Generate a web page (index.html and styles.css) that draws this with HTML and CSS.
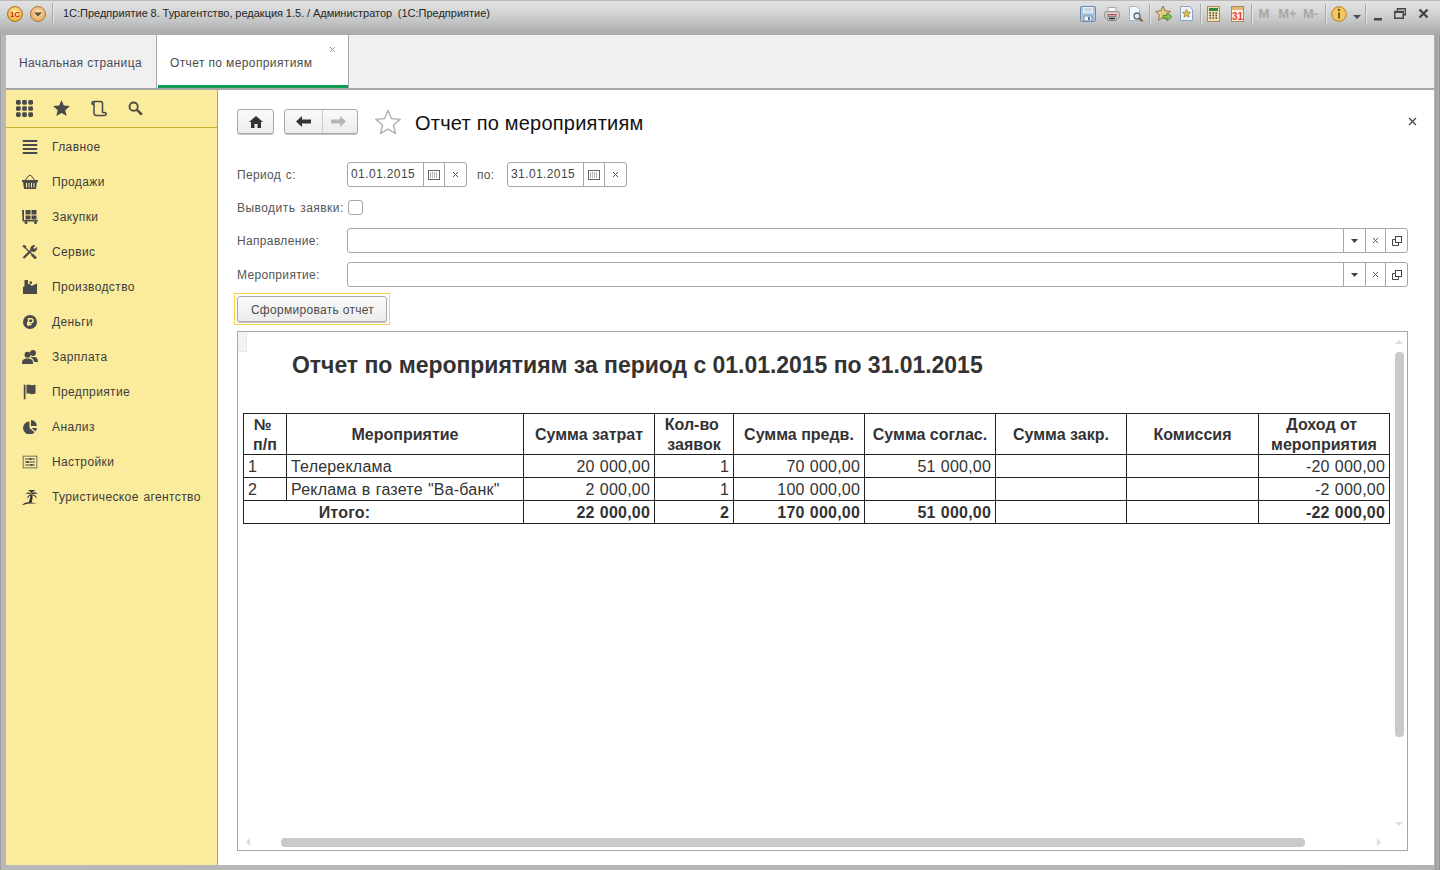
FILE: index.html
```html
<!DOCTYPE html>
<html lang="ru">
<head>
<meta charset="utf-8">
<title>Отчет по мероприятиям</title>
<link rel="stylesheet" href="styles.css">
</head>
<body>
<div class="window">
  <header class="titlebar">
    <svg class="t-logo" width="18" height="18" viewBox="0 0 18 18"><defs><radialGradient id="lg" cx="50%" cy="40%" r="60%"><stop offset="0" stop-color="#fff3b0"/><stop offset="1" stop-color="#eda62c"/></radialGradient></defs><circle cx="9" cy="9" r="7.5" fill="url(#lg)" stroke="#a8762a"/><text x="9" y="12" text-anchor="middle" class="t-logo-text">1С</text></svg>
    <svg class="t-menu" width="18" height="18" viewBox="0 0 18 18"><defs><radialGradient id="lm" cx="50%" cy="40%" r="60%"><stop offset="0" stop-color="#fde3b4"/><stop offset="1" stop-color="#e6a558"/></radialGradient></defs><circle cx="9" cy="9" r="7.5" fill="url(#lm)" stroke="#a97c44"/><path d="M5 7.5h8L9 11.5z" fill="#5c5249"/></svg>
    <span class="t-sep t-sep-first"></span>
    <span class="t-text">1С:Предприятие 8. Турагентство, редакция 1.5. / Администратор&nbsp; (1С:Предприятие)</span>
    <div class="t-tools">
      <span class="tb"><svg width="16" height="16" viewBox="0 0 16 16"><rect x=".5" y=".5" width="15" height="15" rx="1" fill="#a9c6df" stroke="#6d8ba8"/><rect x="3" y="1" width="10" height="6" fill="#eef4fa"/><path d="M4 3h8M4 5h8" stroke="#a9bccd"/><rect x="4" y="10" width="8" height="5" fill="#f4f6f8" stroke="#6d8ba8"/><rect x="8" y="11" width="2" height="3" fill="#56738f"/></svg></span>
      <span class="tb"><svg width="16" height="16" viewBox="0 0 16 16"><rect x="4" y="1.5" width="8" height="5" fill="#f5f5f5" stroke="#aaa"/><rect x=".5" y="5.5" width="15" height="7" rx="2" fill="#cfcbc8" stroke="#95918e"/><rect x="3" y="8" width="10" height="1.5" fill="#c0605a"/><rect x="4" y="10.5" width="8" height="4" fill="#fff" stroke="#888"/><path d="M5 12.500h6" stroke="#333" stroke-width="2"/></svg></span>
      <span class="tb"><svg width="18" height="16" viewBox="0 0 18 16"><path d="M2.500 .5h7l3 3v11h-10z" fill="#f2f7fc" stroke="#9fb8cf"/><circle cx="10" cy="10" r="3" fill="#dfe8ef" stroke="#5f6a72" stroke-width="1.300"/><path d="M12.300 12.300l3.200 3" stroke="#8a5a2c" stroke-width="2"/></svg></span>
      <span class="t-sep t-sep-a"></span>
      <span class="tb"><svg width="18" height="18" viewBox="0 0 18 18"><path d="M8 1l2.200 4.800 5.300.6-3.900 3.600 1 5.200L8 12.600 3.400 15.200l1-5.200L.5 6.400l5.300-.6z" fill="#e3cb85" stroke="#8d7a47"/><path d="M8 10.500h4V8l5 3.700-5 3.800v-2.500H8z" fill="#8cc455" stroke="#4b8f2a"/></svg></span>
      <span class="tb tb-n"><svg width="13" height="15" viewBox="0 0 13 15"><path d="M.5.5h9l3 3v11H.5z" fill="#eef4fa" stroke="#89a5bf"/><path d="M6.500 3.500l1.200 2.600 2.800.3-2.100 1.900.6 2.800-2.500-1.400-2.500 1.400.6-2.800-2.100-1.900 2.800-.3z" fill="#e3bf58" stroke="#90773a" stroke-width=".7"/></svg></span>
      <span class="t-sep t-sep-b"></span>
      <span class="tb"><svg width="13" height="16" viewBox="0 0 13 16"><rect x=".5" y=".5" width="12" height="15" fill="#f4dfb2" stroke="#a68b5c"/><rect x="2" y="2" width="9" height="3" fill="#2e8b3c"/><path d="M2.500 7h1.500M5.500 7h1.500M8.500 7h1.500M2.500 9.500h1.500M5.500 9.500h1.500M8.500 9.500h1.500M2.500 12h1.500M5.500 12h1.500M8.500 12h1.500" stroke="#444" stroke-width="1.500"/></svg></span>
      <span class="tb"><svg width="13" height="16" viewBox="0 0 13 16"><rect x=".5" y=".5" width="12" height="15" fill="#fbf4e4" stroke="#a68b5c"/><rect x="1" y="1" width="11" height="3" fill="#e2b772"/><text x="6.500" y="14" text-anchor="middle" class="t-cal">31</text></svg></span>
      <span class="t-sep t-sep-c"></span>
      <span class="tb tb-m">M</span>
      <span class="tb tb-m tb-mp">M+</span>
      <span class="tb tb-m tb-mm">M-</span>
      <span class="t-sep t-sep-d"></span>
      <span class="tb tb-i"><svg width="16" height="16" viewBox="0 0 16 16"><circle cx="8" cy="8" r="7.300" fill="#f4c65f" stroke="#b9822b"/><circle cx="8" cy="4" r="1.300" fill="#7a5a20"/><rect x="7" y="6.500" width="2" height="6" fill="#7a5a20"/></svg></span>
      <svg class="t-drop" width="8" height="8" viewBox="0 0 8 8"><path d="M0 3h8L4 7z" fill="#4d4d4d"/></svg>
      <span class="t-sep t-sep-e"></span>
      <svg class="w-btn w-min" width="8" height="8" viewBox="0 0 8 8"><rect y="5" width="8" height="2.500" fill="#444"/></svg>
      <svg class="w-btn w-res" width="12" height="11" viewBox="0 0 12 11"><path d="M3.500 2.500V.75h8v6h-2M.75 3.500h8.500v6.750H.75z" fill="none" stroke="#444" stroke-width="1.500"/><path d="M1 4h8" stroke="#444" stroke-width="2"/></svg>
      <svg class="w-btn w-cls" width="11" height="11" viewBox="0 0 11 11"><path d="M1.500 1.500l8 8M9.500 1.500l-8 8" stroke="#444" stroke-width="2.400"/></svg>
    </div>
  </header>

  <div class="client">
    <nav class="tabs">
      <div class="tab">Начальная страница</div>
      <div class="tab tab-active">Отчет по мероприятиям
        <svg class="tab-x" width="7" height="7" viewBox="0 0 7 7"><path d="M1 1l5 5M6 1L1 6" stroke="#999"/></svg>
      </div>
    </nav>

    <div class="body">
      <aside class="side">
        <div class="side-tools">
          <svg class="st st-grid" width="17" height="17" viewBox="0 0 18 18" fill="#4a4a4a"><rect x="0" y="0" width="5" height="5" rx="1.500"/><rect x="6.500" y="0" width="5" height="5" rx="1.500"/><rect x="13" y="0" width="5" height="5" rx="1.500"/><rect x="0" y="6.500" width="5" height="5" rx="1.500"/><rect x="6.500" y="6.500" width="5" height="5" rx="1.500"/><rect x="13" y="6.500" width="5" height="5" rx="1.500"/><rect x="0" y="13" width="5" height="5" rx="1.500"/><rect x="6.500" y="13" width="5" height="5" rx="1.500"/><rect x="13" y="13" width="5" height="5" rx="1.500"/></svg>
          <svg class="st st-star" width="17" height="16" viewBox="0 0 18 17"><path d="M9 0l2.400 5.900 6.600.6-5 4.300 1.500 6.200L9 13.700 3.500 17 5 10.800 0 6.500l6.600-.6z" fill="#4a4a4a"/></svg>
          <svg class="st st-scroll" width="16" height="17" viewBox="0 0 16 17" fill="none" stroke="#4a4a4a" stroke-width="1.500"><path d="M3 1.500h6.500c1.200 0 2 .8 2 2V13"/><path d="M3 1.500C1.500 1.500 1 2.500 1 3.200 1 4 1.700 4.500 3 4.500"/><path d="M3 1.500v11.300c0 1.500.8 2.700 2.400 2.700H13"/><path d="M11.500 12.500h2c1.200 0 1.800.8 1.800 1.500s-.8 1.500-2.300 1.500"/></svg>
          <svg class="st st-search" width="15" height="15" viewBox="0 0 16 16" fill="none" stroke="#4a4a4a"><circle cx="6" cy="6" r="4.400" stroke-width="2"/><path d="M9.500 9.500l5.300 5" stroke-width="2.800"/></svg>
        </div>
        <ul class="menu">
          <li class="mi"><svg class="mi-i" width="15" height="14" viewBox="0 0 15 14" fill="#4a4a4a"><rect width="15" height="2"/><rect y="4" width="15" height="2"/><rect y="8" width="15" height="2"/><rect y="12" width="15" height="2"/></svg>Главное</li>
          <li class="mi"><svg class="mi-i" width="16" height="14" viewBox="0 0 16 14" fill="#4a4a4a"><path d="M0 5h16v2h-1l-1 7H2L1 7H0z"/><path d="M3 5.500L7 .5h2l4 5" fill="none" stroke="#4a4a4a"/><path d="M4.500 8v4.500M7 8v4.500M9.500 8v4.500M12 8v4.500" stroke="#fbeb9d"/></svg>Продажи</li>
          <li class="mi"><svg class="mi-i" width="16" height="14" viewBox="0 0 16 14" fill="#4a4a4a"><path d="M0 0h2v10h14v1.500H.5z"/><rect x="3.500" y="0" width="5" height="4.500"/><rect x="9.500" y="0" width="5" height="4.500"/><rect x="3.500" y="5.500" width="5" height="4"/><rect x="9.500" y="5.500" width="5" height="4"/><circle cx="4" cy="12.500" r="1.500"/><circle cx="13.500" cy="12.500" r="1.500"/></svg>Закупки</li>
          <li class="mi"><svg class="mi-i" width="16" height="15" viewBox="0 0 16 15" fill="none" stroke="#4a4a4a"><path d="M1.500 13.500l7.500-7.500" stroke-width="2.200"/><path d="M9 6a3.300 3.300 0 014-4.800L11 3.300l1.500 1.500 2.200-2a3.300 3.300 0 01-5 3.800z" fill="#4a4a4a" stroke-width=".6"/><path d="M3 3l7 7" stroke-width="1.300"/><path d="M10 10l4 4" stroke-width="2.600"/><path d="M.8 1.800l1.300-1.100 2 1.600-1.200 1.200z" fill="#4a4a4a"/></svg>Сервис</li>
          <li class="mi"><svg class="mi-i" width="14" height="14" viewBox="0 0 14 14" fill="#4a4a4a"><path d="M0 14V7l1.500-.8V0H5v4.600L6.500 4V1.500h2.500v2.200H7L8.500 6l5.500-2.500V14z"/></svg>Производство</li>
          <li class="mi"><svg class="mi-i" width="14" height="14" viewBox="0 0 14 14"><circle cx="7" cy="7" r="7" fill="#4a4a4a"/><path d="M5.500 11V3.700H8a2 2 0 010 4.100H4M4 9.500h4.500" fill="none" stroke="#fbeb9d" stroke-width="1.400"/></svg>Деньги</li>
          <li class="mi"><svg class="mi-i" width="16" height="14" viewBox="0 0 16 14" fill="#4a4a4a"><circle cx="5.500" cy="4.800" r="3"/><path d="M0 13c0-3 1.500-4.500 5.500-4.500S11 10 11 13v1H0z"/><circle cx="11" cy="3" r="3"/><path d="M8 7h4c3 0 4 2 4 5h-4c0-2-1.500-4-4-5z"/></svg>Зарплата</li>
          <li class="mi"><svg class="mi-i" width="13" height="15" viewBox="0 0 13 15" fill="#4a4a4a"><rect width="2" height="15"/><path d="M3 0h3c1.500 1 3 1 6 0v9c-3 1-4.500 1-6 0H3z"/></svg>Предприятие</li>
          <li class="mi"><svg class="mi-i" width="14" height="14" viewBox="0 0 14 14" fill="#4a4a4a"><path d="M6.500 1.500v6.500l5 4.300A6.500 6.500 0 116.500 1.500z"/><path d="M8 0a6 6 0 015.800 6H8z"/><path d="M8.500 8h5.500a6 6 0 01-1.500 3.400z"/></svg>Анализ</li>
          <li class="mi"><svg class="mi-i" width="15" height="13" viewBox="0 0 15 13" fill="none" stroke="#4a4a4a"><rect x=".5" y=".5" width="14" height="12"/><path d="M2.500 3.500h10M2.500 6.500h10M2.500 9.500h10"/><path d="M8 2.500v2M5 5.500v2M9 8.500v2" stroke-width="2"/></svg>Настройки</li>
          <li class="mi"><svg class="mi-i" width="17" height="17" viewBox="0 0 17 17" fill="#333"><path d="M8.800 6C8.800 9 8.300 11.500 7 14.200h3C11 11.500 11.200 9 11 6z"/><path d="M10 5.800C8.500 3.500 6 3.200 3.800 5.800 6 5 8 5.200 10 5.800zM10 5.800C11 3 14 3 16.200 5.500 14 5 12 5 10 5.800zM10 6C12 5.500 15.200 6.500 15 10 13.800 8 12 6.800 10 6zM10 6C8 6 5.500 7.500 5.500 10.300 7 8.500 8.500 7 10 6zM10 5.500C9.500 3.500 8 2 6 1.500h8.500C12.500 2 10.800 3.500 10 5.500z"/><path d="M.5 16.800C2 15 4 13.800 7 13.800c3 0 6 .6 8 1.200-3.500-.2-9.500-.4-14.500 1.800z"/></svg>Туристическое агентство</li>
        </ul>
      </aside>

      <main class="main">
        <div class="head">
          <button class="btn-home" type="button"><svg width="14" height="12" viewBox="0 0 14 12" fill="#333"><path d="M7 0l7 6h-2v6H8.500V8h-3v4H2V6H0z"/></svg></button>
          <div class="nav-group">
            <span class="nav-cell"><svg width="15" height="11" viewBox="0 0 15 11" fill="#333"><path d="M0 5.500L6 0v3.500h9v4H6V11z"/></svg></span>
            <span class="nav-cell nav-next"><svg width="15" height="11" viewBox="0 0 15 11" fill="#b5b5b5"><path d="M15 5.500L9 0v3.500H0v4h9V11z"/></svg></span>
          </div>
          <svg class="head-star" width="26" height="25" viewBox="0 0 26 25"><path d="M13 1.500l3.400 8 8.600.8-6.500 5.700 2 8.500L13 20l-7.500 4.500 2-8.500L1 10.300l8.600-.8z" fill="#fff" stroke="#b4b4b4" stroke-width="1.500"/></svg>
          <h1 class="head-title">Отчет по мероприятиям</h1>
          <svg class="head-x" width="9" height="9" viewBox="0 0 9 9"><path d="M1 1l7 7M8 1L1 8" stroke="#444" stroke-width="1.200"/></svg>
        </div>

        <div class="row row-first">
          <label class="lbl">Период с:</label>
          <div class="field f-date">
            <span class="f-val">01.01.2015</span>
            <span class="f-cell c-cal"><svg width="12" height="10" viewBox="0 0 12 10"><rect x=".5" y=".5" width="11" height="9" fill="#fff" stroke="#666"/><path d="M2 3h8M2 5h8M2 7h8" stroke="#666" stroke-dasharray="1 1"/></svg></span>
            <span class="f-cell c-x"><svg width="7" height="7" viewBox="0 0 7 7"><path d="M1 1l5 5M6 1L1 6" stroke="#555"/></svg></span>
          </div>
          <label class="lbl lbl-to">по:</label>
          <div class="field f-date">
            <span class="f-val">31.01.2015</span>
            <span class="f-cell c-cal"><svg width="12" height="10" viewBox="0 0 12 10"><rect x=".5" y=".5" width="11" height="9" fill="#fff" stroke="#666"/><path d="M2 3h8M2 5h8M2 7h8" stroke="#666" stroke-dasharray="1 1"/></svg></span>
            <span class="f-cell c-x"><svg width="7" height="7" viewBox="0 0 7 7"><path d="M1 1l5 5M6 1L1 6" stroke="#555"/></svg></span>
          </div>
        </div>
        <div class="row">
          <label class="lbl lbl-check">Выводить заявки:</label>
          <span class="check"></span>
        </div>
        <div class="row">
          <label class="lbl">Направление:</label>
          <div class="field f-wide">
            <span class="f-val"></span>
            <span class="f-cell c-drop"><svg width="7" height="4" viewBox="0 0 7 4"><path d="M0 0h7L3.500 4z" fill="#444"/></svg></span>
            <span class="f-cell c-x2"><svg width="7" height="7" viewBox="0 0 7 7"><path d="M1 1l5 5M6 1L1 6" stroke="#555"/></svg></span>
            <span class="f-cell c-open"><svg width="10" height="10" viewBox="0 0 10 10" fill="none" stroke="#444"><rect x="3.500" y=".5" width="6" height="6"/><path d="M3 3.500H.5v6h6V7"/></svg></span>
          </div>
        </div>
        <div class="row row-tight">
          <label class="lbl">Мероприятие:</label>
          <div class="field f-wide">
            <span class="f-val"></span>
            <span class="f-cell c-drop"><svg width="7" height="4" viewBox="0 0 7 4"><path d="M0 0h7L3.500 4z" fill="#444"/></svg></span>
            <span class="f-cell c-x2"><svg width="7" height="7" viewBox="0 0 7 7"><path d="M1 1l5 5M6 1L1 6" stroke="#555"/></svg></span>
            <span class="f-cell c-open"><svg width="10" height="10" viewBox="0 0 10 10" fill="none" stroke="#444"><rect x="3.500" y=".5" width="6" height="6"/><path d="M3 3.500H.5v6h6V7"/></svg></span>
          </div>
        </div>
        <div class="gen-wrap"><button class="gen" type="button">Сформировать отчет</button></div>

        <section class="report">
          <span class="rep-corner"></span>
          <h2 class="rep-title">Отчет по мероприятиям за период с 01.01.2015 по 31.01.2015</h2>
          <table class="rep-table">
            <colgroup><col class="c1"><col class="c2"><col class="c3"><col class="c4"><col class="c5"><col class="c6"><col class="c7"><col class="c8"><col class="c9"></colgroup>
            <thead>
              <tr class="r-h"><th>№&nbsp;<br>п/п</th><th>Мероприятие</th><th>Сумма затрат</th><th>Кол-во&nbsp;<br>заявок</th><th>Сумма предв.</th><th>Сумма соглас.</th><th>Сумма закр.</th><th>Комиссия</th><th>Доход от&nbsp;<br>мероприятия</th></tr>
            </thead>
            <tbody>
              <tr class="r-d"><td>1</td><td>Телереклама</td><td class="n">20 000,00</td><td class="n">1</td><td class="n">70 000,00</td><td class="n">51 000,00</td><td></td><td></td><td class="n">-20 000,00</td></tr>
              <tr class="r-d"><td>2</td><td>Реклама в газете "Ва-банк"</td><td class="n">2 000,00</td><td class="n">1</td><td class="n">100 000,00</td><td></td><td></td><td></td><td class="n">-2 000,00</td></tr>
              <tr class="r-t"><td colspan="2" class="tot-l">Итого:</td><td class="n">22 000,00</td><td class="n">2</td><td class="n">170 000,00</td><td class="n">51 000,00</td><td></td><td></td><td class="n">-22 000,00</td></tr>
            </tbody>
          </table>
          <span class="sb-v"></span>
          <span class="sb-h"></span>
          <i class="ar ar-u"></i><i class="ar ar-d"></i><i class="ar ar-l"></i><i class="ar ar-r"></i>
        </section>
      </main>
    </div>
  </div>
</div>
</body>
</html>
```

FILE: styles.css
```css
* { box-sizing: border-box; }
html, body { margin: 0; height: 100%; overflow: hidden; }
body { font-family: "Liberation Sans", Arial, sans-serif; font-size: 12px; color: #4b4b4b; }
svg { display: block; flex: none; }

.window {
  width: 1440px; height: 870px; display: flex; flex-direction: column;
  background: linear-gradient(90deg, #8a8a8a 0, #b8b8b8 1px, #b4b4b4 1434px, #a0a0a0 1436px, #b0b0b0 1439px, #777 1440px);
}

/* title bar */
.titlebar {
  height: 35px; flex: none; display: flex; align-items: flex-start; padding: 5px 0 0 6px;
  background: linear-gradient(180deg, #8f8f8f 0, #e2e2e2 1px, #d8d8d8 10px, #c2c3c4 22px, #a8a9ac 35px);
}
.t-logo-text { font: bold 8px "Liberation Sans", sans-serif; fill: #d4261c; }
.t-cal { font: bold 10px "Liberation Sans", sans-serif; fill: #e8402a; }
.t-menu { margin-left: 5px; }
.t-sep { display: block; width: 1px; height: 20px; background: #a9a9a9; box-shadow: 1px 0 0 #e6e6e6; flex: none; margin-top: -2px; }
.t-sep-first { margin-left: 5px; }
.t-text { margin: 1px 0 0 10px; font-size: 11px; line-height: 15px; color: #262626; white-space: nowrap; word-spacing: -.2px; letter-spacing: -.01px; }
.t-tools { margin-left: auto; display: flex; align-items: center; height: 17px; padding-right: 11px; }
.tb { width: 24px; height: 17px; display: flex; align-items: center; justify-content: center; flex: none; }
.tb-n { width: 20px; }
.tb-m { font-size: 13px; font-weight: bold; color: #aaa6a2; }
.tb-mp, .tb-mm { width: 23px; }
.tb-i { width: 18px; }
.t-sep-a { margin: 0 2px 0 1.500px; }
.t-sep-b { margin: 0 0 0 4px; }
.t-sep-c { margin: 0 0 0 2px; }
.t-sep-d { margin: 0 4px 0 3px; }
.t-sep-e { margin: 0 8px 0 4px; }
.t-drop { margin-left: 5px; margin-top: 4px; }
.w-btn { flex: none; }
.w-min { margin-top: 6px; }
.w-res { margin-left: 12px; }
.w-cls { margin-left: 12px; }

/* client */
.client { flex: 1; min-height: 0; margin: 0 6px 5px; display: flex; flex-direction: column; background: #fff; }
.tabs { height: 55px; flex: none; display: flex; background: #f0f0f0; border-bottom: 2px solid #a6a6a6; }
.tab { position: relative; width: 151px; padding: 21px 0 0 13px; font-size: 12px; line-height: 15px; color: #4a4a5a; border-right: 1px solid #a8a8a8; letter-spacing: .38px; white-space: nowrap; }
.tab-active { width: 192px; background: #fff; color: #4b4b4b; }
.tab-active::after { content: ""; position: absolute; left: 1px; right: 0; bottom: 0; height: 3px; background: #0c9c53; }
.tab-x { position: absolute; right: 12px; top: 11px; }

.body { flex: 1; min-height: 0; display: flex; }

/* sidebar */
.side { width: 212px; flex: none; background: #fbeb9d; border-right: 1px solid #b7a52e; }
.side-tools { height: 38px; display: flex; align-items: center; padding: 0 0 1px 10px; border-bottom: 1px solid #c8ae32; }
.st-star { margin-left: 20px; }
.st-scroll { margin-left: 21px; }
.st-search { margin-left: 21px; }
.menu { list-style: none; margin: 0; padding: 1px 0 0; }
.mi { height: 35px; display: flex; align-items: center; position: relative; padding-left: 46px; color: #3c3c3c; letter-spacing: .38px; word-spacing: 1px; white-space: nowrap; }
.mi-i { position: absolute; left: 24px; top: 50%; transform: translate(-50%, -50%); }

/* main */
.main { flex: 1; min-width: 0; display: flex; flex-direction: column; padding: 19px 26px 14px 19px; background: #fff; }
.head { height: 25px; flex: none; display: flex; align-items: center; position: relative; }
.btn-home, .nav-group, .gen {
  background: linear-gradient(180deg, #fafafa, #ececec); border: 1px solid #a8a8a8; border-radius: 3px; box-shadow: 0 1px 0 #c4c4c4;
}
.btn-home { width: 37px; height: 25px; display: flex; align-items: center; justify-content: center; padding: 0; }
.nav-group { width: 74px; height: 25px; margin-left: 10px; display: flex; }
.nav-cell { width: 37px; display: flex; align-items: center; justify-content: center; }
.nav-next { width: 35px; padding-right: 4px; border-left: 1px solid #ccc; }
.head-star { margin-left: 17px; }
.head-title { margin: 4px 0 0 14px; font-size: 20px; font-weight: normal; color: #111; letter-spacing: .22px; white-space: nowrap; }
.head-x { position: absolute; right: -9px; top: 8px; }

.row { height: 25px; margin-top: 8px; flex: none; display: flex; align-items: center; }
.row-first { margin-top: 28px; }
.row-tight { margin-top: 9px; }
.lbl { width: 110px; flex: none; color: #555; letter-spacing: .34px; word-spacing: 1px; white-space: nowrap; }
.lbl-check { letter-spacing: .46px; }
.lbl-to { width: 30px; margin-left: 10px; }
.field { height: 25px; display: flex; border: 1px solid #a6a6a6; border-radius: 3px; background: #fff; }
.f-date { width: 120px; }
.f-wide { flex: 1; min-width: 0; }
.f-val { flex: 1; min-width: 0; padding-left: 3px; line-height: 22px; color: #444; letter-spacing: .4px; }
.f-cell { display: flex; align-items: center; justify-content: center; border-left: 1px solid #a6a6a6; flex: none; }
.c-cal { width: 21px; }
.c-x { width: 22px; }
.c-drop { width: 22px; }
.c-x2 { width: 20px; }
.c-open { width: 22px; }
.check { width: 15px; height: 15px; margin-left: 1px; border: 1px solid #a6a6a6; border-radius: 3px; background: #fff; }

.gen-wrap { margin: 6px 0 0 -3px; width: 156px; height: 32px; flex: none; padding: 2px; border: 1px solid #f8d34a; }
.gen { display: block; width: 150px; height: 26px; padding: 1px 0 0 1px; font: 12px "Liberation Sans", sans-serif; color: #4b4b4b; letter-spacing: .3px; }

/* report */
.report { flex: 1; min-height: 0; margin-top: 6px; position: relative; border: 1px solid #a6a6a6; background: #fff; padding: 0 0 0 5px; overflow: hidden; }
.rep-corner { position: absolute; left: 0; top: 0; width: 9px; height: 20px; background: #f3f3f3; border-right: 1px solid #e8e8e8; border-bottom: 1px solid #e8e8e8; }
.rep-title { margin: 20px 0 34px 49px; height: 27px; font-size: 23px; line-height: 27px; font-weight: bold; color: #333; white-space: nowrap; letter-spacing: -.035px; }
.rep-table { border-collapse: collapse; table-layout: fixed; width: 1146px; font-size: 16px; color: #333; }
.c1 { width: 43px; } .c2 { width: 237px; } .c3 { width: 131px; } .c4 { width: 79px; } .c5 { width: 131px; }
.c6 { width: 131px; } .c7 { width: 131px; } .c8 { width: 132px; } .c9 { width: 131px; }
.rep-table th, .rep-table td { border: 1px solid #222; padding: 0 4px; overflow: hidden; white-space: nowrap; }
.rep-table th { font-weight: bold; line-height: 19.500px; text-align: center; padding: 1px 0 0; }
.rep-table td { padding-top: 1px; line-height: 19px; letter-spacing: .2px; word-spacing: .6px; }
.r-h { height: 41px; }
.r-d { height: 23px; }
.r-t { height: 23px; font-weight: bold; }
.n { text-align: right; }
.rep-table .tot-l { text-align: center; padding-right: 82px; }

.sb-v { position: absolute; left: 1157px; top: 20px; width: 9px; height: 385px; border-radius: 4px; background: #c9c9c9; }
.sb-h { position: absolute; left: 43px; top: 506px; width: 1024px; height: 9px; border-radius: 4px; background: #c9c9c9; }
.ar { position: absolute; width: 0; height: 0; border-style: solid; border-color: transparent; }
.ar-u { left: 1157px; top: 8px; border-width: 0 4px 4px; border-bottom-color: #ddd; }
.ar-d { left: 1157px; top: 490px; border-width: 4px 4px 0; border-top-color: #ddd; }
.ar-l { left: 8px; top: 506px; border-width: 4px 4px 4px 0; border-right-color: #ddd; }
.ar-r { left: 1139px; top: 506px; border-width: 4px 0 4px 4px; border-left-color: #ddd; }
```
